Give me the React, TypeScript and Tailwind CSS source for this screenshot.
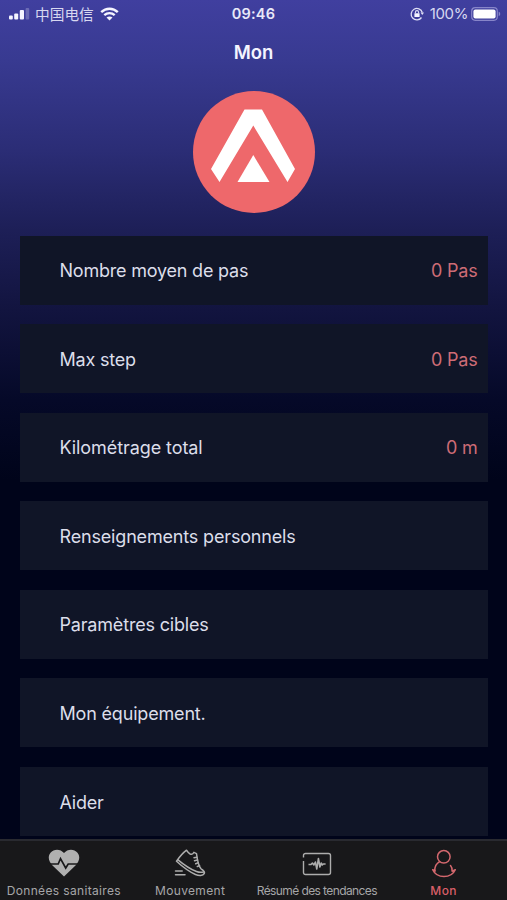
type Row = { label: string; value?: string; spacing: string };

const rows: Row[] = [
  { label: "Nombre moyen de pas", value: "0 Pas", spacing: "tracking-[-0.210px]" },
  { label: "Max step", value: "0 Pas", spacing: "tracking-[-0.200px]" },
  { label: "Kilométrage total", value: "0 m", spacing: "tracking-[-0.080px]" },
  { label: "Renseignements personnels", spacing: "tracking-[-0.170px]" },
  { label: "Paramètres cibles", spacing: "tracking-[-0.180px]" },
  { label: "Mon équipement.", spacing: "tracking-[-0.180px]" },
  { label: "Aider", spacing: "tracking-[-0.200px]" },
];

function StatusBar() {
  return (
    <div className="grid h-[27px] grid-cols-3 items-center pl-[9px] pr-[6px] text-[#e9e9f8]">
      <div className="flex items-center">
        <svg width="21" height="12" viewBox="0 0 21 12" fill="#f5f5ff">
          <rect x="0" y="7.5" width="3.8" height="4" rx="1" />
          <rect x="5.2" y="5.5" width="4" height="6" rx="1" />
          <rect x="10.8" y="2" width="4.200" height="9.5" rx="1" />
          <rect x="16.6" y="0" width="3.6" height="11.5" rx="1" opacity="0.25" />
        </svg>
        <span className="ml-[5px] whitespace-nowrap font-['Noto_Sans_CJK_SC',sans-serif] text-[14.700px] leading-5 text-[#d8d8f0]">
          中国电信
        </span>
        <svg className="ml-[6px]" width="19" height="14" viewBox="0 0 19 14" fill="none" stroke="#f5f5ff">
          <path d="M1.2 5.2C6 .5 13 .5 17.8 5.2" strokeWidth="2.4" />
          <path d="M4.3 8.2c3-2.8 7.400-2.8 10.400 0" strokeWidth="2.300" />
          <path d="M6.500 10.500c1.700-1.500 4.300-1.500 6 0l-3 3z" fill="#f5f5ff" stroke="none" />
        </svg>
      </div>
      <div className="pr-[3px] text-center text-[14.500px] font-semibold leading-5 tracking-[0.200px]">09:46</div>
      <div className="flex items-center justify-end">
        <svg width="14" height="14" viewBox="0 0 14 14" fill="none" stroke="#dedef5" strokeWidth="1.300">
          <path d="M12.300 5.500A5.700 5.700 0 1 0 11.500 10.500" />
          <path d="M10.500 5.500h3.500l-1.700 2.600z" fill="#dedef5" stroke="none" />
          <rect x="4.400" y="6.200" width="5.200" height="3.800" rx="0.500" fill="#f5f5ff" stroke="none" />
          <path d="M5.400 6.500V5.200a1.600 1.600 0 0 1 3.200 0v1.300" strokeWidth="1.100" />
        </svg>
        <span className="ml-[6px] text-[15px] leading-5 tracking-[-0.400px] text-[#d8d8f0]">100%</span>
        <svg className="ml-[3px]" width="30" height="14" viewBox="0 0 30 14" fill="none">
          <rect x="0.700" y="0.700" width="25.600" height="12.600" rx="3.500" stroke="#8785c9" strokeWidth="1.200" />
          <rect x="2.400" y="2.400" width="22.200" height="9.200" rx="2" fill="#fff" />
          <path d="M27.700 4.800c2 .5 2 3.900 0 4.400z" fill="#8785c9" />
        </svg>
      </div>
    </div>
  );
}

function Logo() {
  return (
    <svg width="122" height="122" viewBox="0 0 122 122">
      <circle cx="61" cy="61" r="61" fill="#ee686b" />
      <path d="M51.500 18.500H69L102 78 94.500 91 60.300 34.500 26.500 91 18 78z" fill="#fff" />
      <path d="M60.300 64L76.500 91H44.500z" fill="#fff" />
    </svg>
  );
}

function HeartIcon() {
  return (
    <svg width="32" height="28" viewBox="0 0 32 28">
      <path
        d="M16 27.500L4.500 16.500C.5 12.500-.5 7.500 2.500 3.700 6-.5 12.500-.3 16 4c3.500-4.300 10-4.500 13.500-.3 3 3.800 2 8.800-2 12.800z"
        fill="#b0b0b0"
      />
      <path d="M0 15h10.200l2.300-5.300 5.200 9.300 2.500-4H32" fill="none" stroke="#18181a" strokeWidth="1.700" />
    </svg>
  );
}

function ShoeIcon() {
  return (
    <svg width="32" height="28" viewBox="0 0 32 28" fill="none" stroke="#adadad" strokeWidth="1.500" strokeLinejoin="round" strokeLinecap="round">
      <path d="M12.500 1.200C8.500 4.200 5 8.700 2.500 12.200c6 5.500 13 10.500 19 13.300 3.200 1.300 7.500 1.500 8.700-.8.800-1.800-.8-3.600-3.200-4.900-3-3.300-3.700-9-4.500-15.200l-2.600-1.300c-.8 1.900-2 2.400-3.800 1.700-1.600-.7-2.500-2-3.600-3.800z" />
      <path d="M4 10.800c6 5 12 9.200 18.500 11.700 2.500.9 5 1 7 .5M20 8.700l2.800-.5M20.500 11.700l3-.7M21.700 14.700l2.600-.9M23.300 17.500l2.300-.9" />
      <path d="M1.500 22h6.700M1.500 25.700h9.500" />
    </svg>
  );
}

function TrendIcon() {
  return (
    <svg width="30" height="24" viewBox="0 0 30 24" fill="none" stroke="#adadad" strokeWidth="1.400" strokeLinejoin="round">
      <path d="M1.500 5.500V3.500a2 2 0 0 1 2-2h23a2 2 0 0 1 2 2v17a2 2 0 0 1-2 2h-23a2 2 0 0 1-2-2V9" />
      <path d="M6.500 12.500h2.500l1.400-1.500 1.500 2 1.500-3 1.400 7 1.600-10.500 1.500 8.500 1.300-4 1.100 2 1-1h2.300" strokeWidth="1.600" />
    </svg>
  );
}

function UserIcon() {
  return (
    <svg width="26" height="29" viewBox="0 0 26 29" fill="none" stroke="#d4686e" strokeWidth="1.500" strokeLinecap="round" strokeLinejoin="round">
      <circle cx="12.800" cy="7.800" r="6.300" />
      <path d="M8.700 12.700C5.500 14.300 3.700 17 3.800 21.800M1.700 20.700c2 4.300 6.300 6.900 11.300 6.900s9.300-2.600 11.300-6.900M1.700 20.700l2.600 1.300M24.300 20.700l-3.200 1.500M19.500 16.500c1.500 1.700 1.900 3.500 1.600 5.700" />
    </svg>
  );
}

export default function App() {
  return (
    <div className="flex h-[900px] w-[507px] flex-col overflow-hidden bg-[linear-gradient(180deg,#403f9f_0px,#383a91_60px,#2b2d76_150px,#1d1f57_230px,#12143f_310px,#050928_400px,#00041a_480px,#00041a_900px)] font-[Inter,'Noto_Sans',sans-serif]">
      <StatusBar />
      <header className="flex h-[50px] items-center justify-center pt-px text-[18.500px] font-semibold leading-none text-[#f4f4ff]">
        Mon
      </header>
      <div className="flex h-[158.500px] justify-center pl-px pt-[14px]">
        <Logo />
      </div>
      <main className="flex min-h-0 flex-1 flex-col gap-[19.600px] overflow-hidden pl-[20px] pr-[19.500px]">
        {rows.map((row) => (
          <div
            key={row.label}
            className="flex h-[69px] shrink-0 items-center justify-between bg-[#101527] pl-[39.500px] pr-[10px] pt-[2px] text-[18px] leading-none"
          >
            <span className={`text-[#dcdeea] ${row.spacing}`}>{row.label}</span>
            {row.value && <span className="tracking-[-0.200px] text-[#cd6c76]">{row.value}</span>}
          </div>
        ))}
      </main>
      <nav className="grid h-[61px] grid-cols-4 grid-rows-1 border-t-2 border-[#292a30] bg-[#18181a] text-[12px] leading-none text-[#a6a6a8]">
        <div className="flex flex-col items-center pl-px">
          <div className="flex h-[44px] items-center"><HeartIcon /></div>
          <span className="whitespace-nowrap tracking-[0.350px]">Données sanitaires</span>
        </div>
        <div className="flex flex-col items-center">
          <div className="flex h-[44px] items-center"><ShoeIcon /></div>
          <span className="tracking-[0.330px]">Mouvement</span>
        </div>
        <div className="flex flex-col items-center">
          <div className="flex h-[44px] items-center pt-px"><TrendIcon /></div>
          <span className="whitespace-nowrap tracking-[-0.600px]">Résumé des tendances</span>
        </div>
        <div className="flex flex-col items-center text-[#d95f68]">
          <div className="flex h-[44px] items-center"><UserIcon /></div>
          <span className="font-medium tracking-[0.400px]">Mon</span>
        </div>
      </nav>
    </div>
  );
}
